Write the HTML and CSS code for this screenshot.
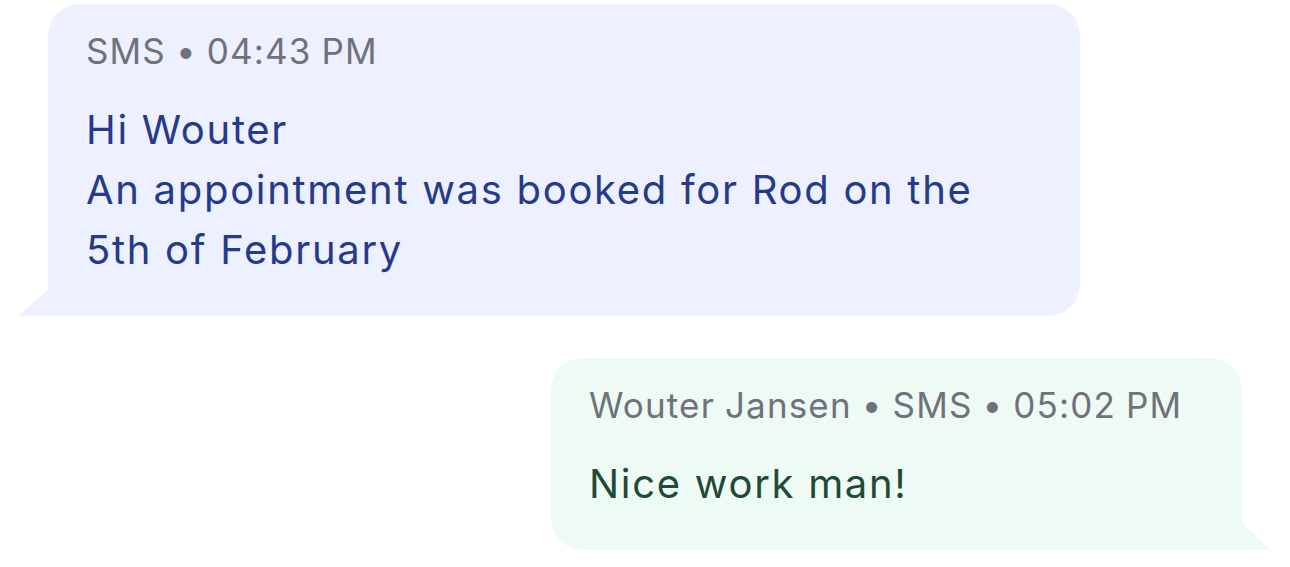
FILE: index.html
```html
<!DOCTYPE html>
<html lang="en">
<head>
<meta charset="utf-8">
<title>Messages</title>
<link rel="stylesheet" href="styles.css">
</head>
<body>
<div class="thread">
  <div class="bubble bubble-in">
    <div class="meta">SMS • 04:43 PM</div>
    <div class="text">Hi Wouter<br>An appointment was booked for Rod on the<br>5th of February</div>
  </div>
  <div class="bubble bubble-out">
    <div class="meta">Wouter Jansen • SMS • 05:02 PM</div>
    <div class="text">Nice work man!</div>
  </div>
</div>
</body>
</html>
```

FILE: styles.css
```css
html, body {
  margin: 0;
  padding: 0;
  background: #ffffff;
}
body {
  font-family: Inter, "Noto Sans", sans-serif;
  width: 1290px;
  height: 567px;
  overflow: hidden;
}
.thread {
  display: flex;
  flex-direction: column;
  gap: 42px;
  padding: 4px 48px 0 48px;
}
.bubble {
  position: relative;
  box-sizing: border-box;
  border-radius: 32px;
  padding: 22px 38px 36px 38px;
}
.meta {
  font-size: 35px;
  line-height: 50px;
  letter-spacing: 1.15px;
  word-spacing: -1px;
  color: #6f717b;
  margin-bottom: 24px;
}
.text {
  font-size: 40px;
  line-height: 60px;
  letter-spacing: 1.7px;
}
.bubble-in {
  align-self: flex-start;
  width: 1032px;
  background: #edf0fe;
  border-bottom-left-radius: 0;
}
.bubble-in .text {
  color: #253a8a;
}
.bubble-in::before {
  content: "";
  position: absolute;
  left: -30px;
  bottom: 0;
  width: 30px;
  height: 26px;
  background: #edf0fe;
  clip-path: polygon(100% 0, 100% 100%, 0 100%);
}
.bubble-out {
  align-self: flex-end;
  width: 691px;
  background: #eefbf4;
  border-bottom-right-radius: 0;
}
.bubble-out .text {
  color: #1e4a37;
}
.bubble-out::after {
  content: "";
  position: absolute;
  right: -29px;
  bottom: 0;
  width: 29px;
  height: 27px;
  background: #eefbf4;
  clip-path: polygon(0 0, 100% 100%, 0 100%);
}
```
